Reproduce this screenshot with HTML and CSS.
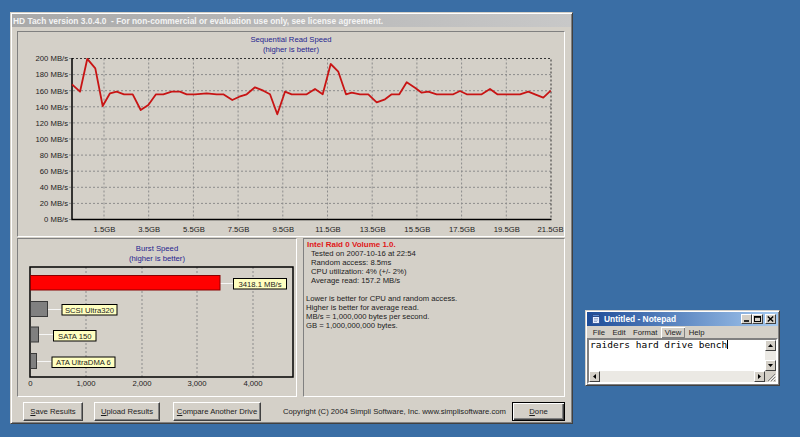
FILE: index.html
```html
<!DOCTYPE html>
<html>
<head>
<meta charset="utf-8">
<title>HD Tach</title>
<link rel="stylesheet" href="styles.css">
</head>
<body>
<div class="win hdtach">
  <div class="titlebar inactive"><span>HD Tach version 3.0.4.0&nbsp; - For non-commercial or evaluation use only, see license agreement.</span></div>
  <div class="client">
    <div class="panel top-panel">
      <div class="chart-title">Sequential Read Speed<br>(higher is better)</div>
      <svg class="chart seq-chart" width="546" height="180" viewBox="0 0 546 180">
        <g transform="translate(-18 -55)">
          <path class="grid" d="M69 74.6H551M69 90.7H551M69 106.8H551M69 122.9H551M69 139H551M69 155.1H551M69 171.2H551M69 187.3H551M69 203.4H551M69 58.5H72M69 219.5H72M104 58.5V219.5M148.7 58.5V219.5M193.4 58.5V219.5M238.1 58.5V219.5M282.8 58.5V219.5M327.5 58.5V219.5M372.2 58.5V219.5M416.9 58.5V219.5M461.6 58.5V219.5M506.3 58.5V219.5"/>
          <path class="frame-dot" d="M72 58.5H551V219.5"/>
          <path class="axis" d="M72 58V219.5H551.5"/>
          <polyline class="trace" points="72,84.3 80,91.7 87.3,58.8 95.3,68.3 102.7,106 110,93.3 116.7,91.7 124,94.3 132.7,94.3 140.7,110 148.3,105 156,94.3 163.3,94.3 171.7,91.7 180,91.7 186.7,94.3 195,94.3 206.7,93.3 216.7,94.3 223.3,94.3 232.3,100 239.3,96.7 246.7,94.3 255,87.3 263.3,90.7 270,94.3 277.3,114.3 285,91.7 291.7,94.3 306.7,94.3 315,89 322.7,94.3 330.7,64 338.3,71.7 346,94.3 351.7,92.7 360,94.3 368.3,94.3 376.7,102.3 385,99.3 391.7,94.3 399.3,94.3 406.7,82.3 415,87.7 421.7,92.7 428.3,91.7 436.7,94.3 453.3,94.3 460,91 466.7,94.3 481.7,94.3 490,89 497.3,94.3 520,94.3 528.3,91.7 535,94.3 543.3,97.7 550.7,90.7"/>
          <g class="ylab">
            <text x="68" y="61.3">200 MB/s</text>
            <text x="68" y="77.4">180 MB/s</text>
            <text x="68" y="93.5">160 MB/s</text>
            <text x="68" y="109.6">140 MB/s</text>
            <text x="68" y="125.7">120 MB/s</text>
            <text x="68" y="141.8">100 MB/s</text>
            <text x="68" y="157.9">80 MB/s</text>
            <text x="68" y="174">60 MB/s</text>
            <text x="68" y="190.1">40 MB/s</text>
            <text x="68" y="206.2">20 MB/s</text>
            <text x="68" y="222.3">0 MB/s</text>
          </g>
          <g class="xlab">
            <text x="104.5" y="231.8">1.5GB</text>
            <text x="149.2" y="231.8">3.5GB</text>
            <text x="193.9" y="231.8">5.5GB</text>
            <text x="238.6" y="231.8">7.5GB</text>
            <text x="283.3" y="231.8">9.5GB</text>
            <text x="328" y="231.8">11.5GB</text>
            <text x="372.7" y="231.8">13.5GB</text>
            <text x="417.4" y="231.8">15.5GB</text>
            <text x="462.1" y="231.8">17.5GB</text>
            <text x="506.8" y="231.8">19.5GB</text>
            <text x="550.5" y="231.8">21.5GB</text>
          </g>
        </g>
      </svg>
    </div>
    <div class="bottom-row">
      <div class="panel burst-panel">
        <div class="chart-title">Burst Speed<br>(higher is better)</div>
        <svg class="chart burst-chart" width="278" height="132" viewBox="0 0 278 132">
          <g transform="translate(-18 -264)">
            <path class="grid" d="M86 267V377M142 267V377M197 267V377M253 267V377"/>
            <rect class="frame" x="30" y="267" width="263" height="110"/>
            <path class="leader" d="M220 283.5H233M47.5 309.5H62M38.5 334.5H53.5M36.5 361.5H52"/>
            <rect class="bar-red" x="30.5" y="275.5" width="189.5" height="14.5"/>
            <rect class="bar-gray" x="30.5" y="301.5" width="17" height="15"/>
            <rect class="bar-gray" x="30.5" y="327" width="8" height="15"/>
            <rect class="bar-gray" x="30.5" y="353.5" width="6" height="15"/>
            <rect class="tag" x="233.5" y="278.5" width="53" height="10.5"/>
            <rect class="tag" x="62" y="304.5" width="55" height="10.5"/>
            <rect class="tag" x="53.5" y="330.5" width="42.5" height="10.5"/>
            <rect class="tag" x="52" y="357" width="63" height="10.5"/>
            <g class="tagtext">
              <text x="260" y="286.6">3418.1 MB/s</text>
              <text x="89.5" y="312.6">SCSI Ultra320</text>
              <text x="74.8" y="338.6">SATA 150</text>
              <text x="83.5" y="365.1">ATA UltraDMA 6</text>
            </g>
            <g class="xlab">
              <text x="30.5" y="386">0</text>
              <text x="86" y="386">1,000</text>
              <text x="142" y="386">2,000</text>
              <text x="197" y="386">3,000</text>
              <text x="253" y="386">4,000</text>
            </g>
          </g>
        </svg>
      </div>
      <div class="panel info-panel">
        <div class="drive">Intel Raid 0 Volume 1.0.</div>
        <div class="ind">Tested on 2007-10-16 at 22:54</div>
        <div class="ind">Random access: 8.5ms</div>
        <div class="ind">CPU utilization: 4% (+/- 2%)</div>
        <div class="ind">Average read: 157.2 MB/s</div>
        <div class="gap"></div>
        <div>Lower is better for CPU and random access.</div>
        <div>Higher is better for average read.</div>
        <div>MB/s = 1,000,000 bytes per second.</div>
        <div>GB = 1,000,000,000 bytes.</div>
      </div>
    </div>
    <div class="button-row">
      <button class="btn btn-save"><u>S</u>ave Results</button>
      <button class="btn btn-upload"><u>U</u>pload Results</button>
      <button class="btn btn-compare"><u>C</u>ompare Another Drive</button>
      <span class="copyright">Copyright (C) 2004 Simpli Software, Inc. www.simplisoftware.com</span>
      <button class="btn btn-done"><u>D</u>one</button>
    </div>
  </div>
</div>

<div class="win notepad">
  <div class="np-title">
    <svg class="np-icon" width="8" height="10" viewBox="0 0 8 10">
      <rect x="0.5" y="1.5" width="7" height="8" fill="#e8f0ff" stroke="#3a5a9a"/>
      <rect x="0.5" y="0.5" width="7" height="2" fill="#5a8ad0" stroke="#2a4a8a"/>
      <path d="M2 4.5H6M2 6H6M2 7.5H5" stroke="#8aa0c8" stroke-width="0.8"/>
    </svg>
    <span class="np-name">Untitled - Notepad</span>
    <div class="np-caps">
      <span class="cap cap-min"><svg width="6" height="6" viewBox="0 0 6 6"><path d="M0 5H5" stroke="#000" stroke-width="1.6"/></svg></span>
      <span class="cap cap-max"><svg width="7" height="6" viewBox="0 0 7 6"><rect x="0.5" y="0.5" width="6" height="5" fill="none" stroke="#000"/><path d="M0 1.2H7" stroke="#000" stroke-width="1.2"/></svg></span>
      <span class="cap cap-close"><svg width="7" height="6" viewBox="0 0 7 6"><path d="M0.8 0.5L6.2 5.5M6.2 0.5L0.8 5.5" stroke="#000" stroke-width="1.4"/></svg></span>
    </div>
  </div>
  <div class="np-menu">
    <span>File</span><span>Edit</span><span>Format</span><span class="hot">View</span><span>Help</span>
  </div>
  <div class="np-edit">
    <div class="np-text">raiders hard drive bench<span class="caret"></span></div>
    <div class="vscroll">
      <span class="sb-btn"><svg width="5" height="3" viewBox="0 0 5 3"><path d="M2.5 0L5 3H0Z" fill="#000"/></svg></span>
      <span class="sb-track"></span>
      <span class="sb-btn"><svg width="5" height="3" viewBox="0 0 5 3"><path d="M0 0H5L2.5 3Z" fill="#000"/></svg></span>
    </div>
    <div class="hscroll">
      <span class="sb-btn"><svg width="3" height="5" viewBox="0 0 3 5"><path d="M0 2.5L3 0V5Z" fill="#000"/></svg></span>
      <span class="sb-track"></span>
      <span class="sb-btn"><svg width="3" height="5" viewBox="0 0 3 5"><path d="M0 0L3 2.5L0 5Z" fill="#000"/></svg></span>
    </div>
    <div class="grip"><svg width="10" height="10" viewBox="0 0 10 10"><path d="M9 2L2 9M9 5L5 9M9 8L8 9" stroke="#808080" stroke-width="1"/><path d="M10 3L3 10M10 6L6 10" stroke="#fff" stroke-width="0.8"/></svg></div>
  </div>
</div>
</body>
</html>
```

FILE: styles.css
```css
* { box-sizing: border-box; }
html, body { margin: 0; padding: 0; }
body {
  width: 800px;
  height: 437px;
  position: relative;
  overflow: hidden;
  background: #3a6ea5;
  font-family: "Liberation Sans", Arial, sans-serif;
  font-size: 7.7px;
  color: #1c1c1c;
}

/* generic classic window */
.win {
  position: absolute;
  display: flex;
  flex-direction: column;
  background: #d4d0c8;
  border: 1px solid;
  border-color: #d4d0c8 #404040 #404040 #d4d0c8;
  box-shadow: inset 1px 1px #ffffff, inset -1px -1px #808080;
  padding: 1px;
}

.hdtach { left: 10px; top: 12px; width: 563px; height: 412px; }

.titlebar {
  height: 13px;
  flex: none;
  display: flex;
  align-items: center;
  padding-left: 1px;
  font-size: 8.4px;
  font-weight: bold;
  white-space: nowrap;
  overflow: hidden;
}
.titlebar.inactive {
  background: linear-gradient(to right, #a9a9a9, #c8c8c8);
  color: #f4f4f4;
}

.client {
  flex: 1;
  display: flex;
  flex-direction: column;
  padding: 4px 6px 1px 5px;
}

.panel {
  border: 1px solid;
  border-color: #808080 #ffffff #ffffff #808080;
}

.top-panel { height: 206px; flex: none; display: flex; flex-direction: column; }
.chart-title { text-align: center; color: #1f1f8f; line-height: 10px; }
.top-panel .chart-title { padding-top: 3px; }

.chart { display: block; }
.chart text { font-family: "Liberation Sans", Arial, sans-serif; font-size: 7.7px; fill: #1c1c1c; }
.chart .ylab text { text-anchor: end; }
.chart .xlab text, .chart .tagtext text { text-anchor: middle; }
.chart .grid { fill: none; stroke: #8c8c8c; stroke-width: 1; stroke-dasharray: 2 2; }
.chart .frame-dot { fill: none; stroke: #333; stroke-width: 1; stroke-dasharray: 2 2; }
.chart .axis { fill: none; stroke: #000; stroke-width: 1.5; }
.chart .trace { fill: none; stroke: #c81414; stroke-width: 1.8; stroke-linejoin: round; }
.chart .frame { fill: none; stroke: #000; stroke-width: 1.5; }
.chart .leader { fill: none; stroke: #f6f6f6; stroke-width: 1; }
.chart .bar-red { fill: #ff0000; stroke: #8a0000; stroke-width: 1; }
.chart .bar-gray { fill: #808080; stroke: #3a3a3a; stroke-width: 1; }
.chart .tag { fill: #ffffc0; stroke: #000; stroke-width: 1; }

.bottom-row { margin-top: 1px; height: 159px; flex: none; display: flex; gap: 6px; }
.burst-panel { width: 280px; display: flex; flex-direction: column; }
.burst-panel .chart-title { padding-top: 5px; }

.info-panel { flex: 1; padding: 1px 0 0 2px; line-height: 9px; }
.info-panel .drive { color: #e01818; font-weight: bold; padding-left: 1px; font-size: 8px; }
.info-panel .ind { padding-left: 5px; }
.info-panel .gap { height: 9px; }

.button-row { margin-top: 5px; height: 19px; flex: none; display: flex; align-items: center; }
.btn {
  height: 19px;
  padding: 0;
  font-family: "Liberation Sans", Arial, sans-serif;
  font-size: 7.7px;
  color: #1c1c1c;
  background: #d4d0c8;
  border: 1px solid;
  border-color: #ffffff #404040 #404040 #ffffff;
  box-shadow: inset -1px -1px #808080;
  border-radius: 0;
}
.btn-save { margin-left: 6px; width: 60px; }
.btn-upload { margin-left: 11px; width: 66px; }
.btn-compare { margin-left: 13px; width: 88px; }
.copyright { margin-left: 22px; white-space: nowrap; }
.btn-done {
  margin-left: auto;
  width: 53px;
  border-color: #000;
  box-shadow: inset 1px 1px #ffffff, inset -1px -1px #404040, inset -2px -2px #808080;
}

/* notepad */
.notepad { left: 585px; top: 310px; width: 195px; height: 76px; }
.np-title {
  height: 14px;
  flex: none;
  display: flex;
  align-items: center;
  padding: 0 2px 0 5px;
  background: linear-gradient(to right, #1d4c98, #a6caf0);
  color: #ffffff;
  font-size: 8.4px;
  font-weight: bold;
}
.np-icon { display: block; margin-right: 4px; }
.np-name { flex: 1; white-space: nowrap; }
.np-caps { display: flex; align-items: center; }
.cap {
  width: 11px;
  height: 10px;
  display: flex;
  align-items: center;
  justify-content: center;
  background: #d4d0c8;
  border: 1px solid;
  border-color: #ffffff #404040 #404040 #ffffff;
}
.cap-max { margin-right: 2px; }
.cap svg { display: block; }

.np-menu { height: 12px; flex: none; display: flex; align-items: center; padding-left: 2px; }
.np-menu span { padding: 0 3.7px; line-height: 11px; }
.np-menu .hot { box-shadow: inset 1px 1px #ffffff, inset -1px -1px #808080; }

.np-edit {
  flex: 1;
  display: grid;
  grid-template-columns: 1fr 11px;
  grid-template-rows: 1fr 11px;
  border: 2px solid;
  border-color: #808080 #ffffff #ffffff #808080;
  background: #ffffff;
}
.np-text {
  font-family: "DejaVu Sans Mono", "Liberation Mono", monospace;
  font-size: 9.5px;
  line-height: 9px;
  color: #000;
  padding: 0 0 0 1px;
  white-space: nowrap;
  overflow: hidden;
}
.caret { display: inline-block; width: 1px; height: 9px; background: #000; vertical-align: top; }
.vscroll, .hscroll { display: flex; background: #ebe9e4; }
.vscroll { flex-direction: column; }
.sb-track { flex: 1; }
.sb-btn {
  width: 11px;
  height: 11px;
  flex: none;
  display: flex;
  align-items: center;
  justify-content: center;
  background: #d4d0c8;
  border: 1px solid;
  border-color: #ffffff #404040 #404040 #ffffff;
}
.sb-btn svg { display: block; }
.grip { background: #d4d0c8; display: flex; align-items: flex-end; justify-content: flex-end; }
.grip svg { display: block; }
```
